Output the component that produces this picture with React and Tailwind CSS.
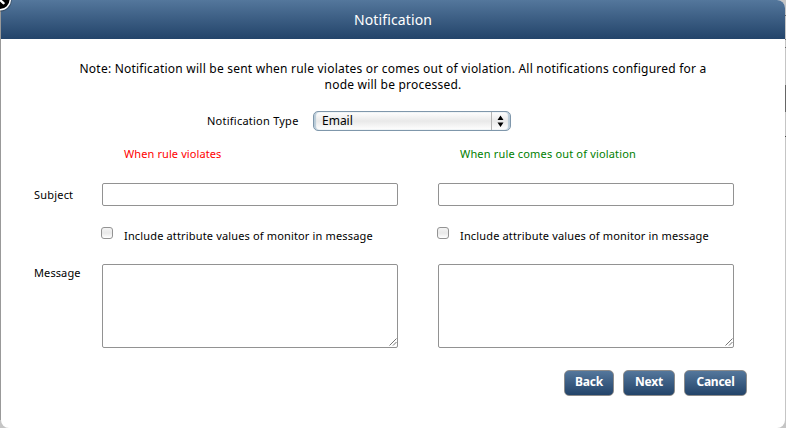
import React from 'react';

function Resizer() {
  return (
    <svg width="10" height="10" viewBox="0 0 10 10" className="absolute right-0 bottom-px">
      <path d="M1.5 8.5L8.5 1.5M5 8.5L8.5 5" stroke="#666" strokeWidth="0.9" fill="none" />
    </svg>
  );
}

function CheckRow() {
  return (
    <label className="flex h-[13px] w-[336px] items-start">
      <input
        type="checkbox"
        className="-ml-px size-3 shrink-0 appearance-none rounded-[3px] border border-[#939393] bg-linear-to-b from-[#f4f4f4] via-[#e9e9e9] to-white"
      />
      <span className="ml-[11px] pt-[2px] text-[11px] leading-[14px] tracking-[0.155px] whitespace-nowrap">
        Include attribute values of monitor in message
      </span>
    </label>
  );
}

function SubjectInput() {
  return <input type="text" className="mr-10 block h-[23px] w-[296px] rounded-[2px] border border-[#929292] bg-white" />;
}

function MessageArea() {
  return (
    <div className="relative mr-10 h-[84px] w-[296px]">
      <textarea className="block size-full resize-none rounded-[2px] border border-[#929292] bg-white" />
      <Resizer />
    </div>
  );
}

function Button({ className, children }) {
  return (
    <button
      className={
        'h-[26px] rounded-[5px] border border-[#8c8c8c] bg-linear-to-b from-[#54779c] to-[#23446a] pb-[2px] text-center text-[12px] leading-[22px] font-bold tracking-[-0.25px] text-white ' +
        className
      }
    >
      {children}
    </button>
  );
}

export default function App() {
  return (
    <div className="relative h-[428px] w-[786px] overflow-hidden bg-[#c5c5c5] font-['Noto_Sans','Open_Sans',sans-serif] text-black">
      <div className="absolute top-[15px] right-0 h-px w-px bg-[#666]" />
      <div className="absolute top-[39px] right-0 h-px w-px bg-[#777]" />
      <div className="absolute top-[47px] right-0 h-px w-px bg-[#666]" />
      <div className="absolute top-[85px] right-0 h-[27px] w-px bg-[#666]" />
      <div className="absolute top-[136px] right-0 h-px w-px bg-[#444]" />
      <div className="absolute top-0 left-0 h-[420px] w-px bg-[#999]" />
      <div className="relative ml-px h-[428px] w-[784px] overflow-hidden rounded-tr-[8px] rounded-b-[8px] bg-white">
        <header className="flex h-[39px] items-center justify-center bg-linear-to-b from-[#54779c] to-[#23446a]">
          <h1 className="text-[14px] leading-5 tracking-[0.14px] text-white">Notification</h1>
        </header>

        <p className="mt-[22px] text-center text-[12px] leading-4 tracking-[0.225px]">
          Note: Notification will be sent when rule violates or comes out of violation. All notifications configured for a
          <br />
          node will be processed.
        </p>

        <div className="mt-[18px] flex h-5 items-center">
          <span className="ml-[206px] w-[106px] text-[11px] leading-4 tracking-[0.24px]">Notification Type</span>
          <div className="flex h-5 w-[198px] items-center rounded-[5px] border border-[#7f97ab] bg-linear-to-b from-white via-[#e9e9e9] to-white shadow-[inset_2px_0_1px_#b9cbd8,inset_-2px_0_1px_#b9cbd8]">
            <span className="ml-2 flex-1 text-[12px] leading-4">Email</span>
            <span className="h-full w-px bg-[#b4b4b4]" />
            <svg width="18" height="18" viewBox="0 0 18 18" className="shrink-0">
              <path d="M5.5 8L8.5 3.5L11.5 8ZM5.5 10.5L8.5 15L11.5 10.5Z" fill="#000" />
            </svg>
          </div>
        </div>

        <div className="mt-[15px] flex h-4 pl-[123px] text-[11px] leading-4">
          <span className="w-[336px] tracking-[0.1px] text-[#ff0000]">When rule violates</span>
          <span className="tracking-[0.17px] text-[#008000]">When rule comes out of violation</span>
        </div>

        <div className="mt-[21px] flex h-[23px]">
          <span className="w-[101px] pt-1 pl-[33px] text-[11px] leading-4 tracking-[0.2px]">Subject</span>
          <SubjectInput />
          <SubjectInput />
        </div>

        <div className="mt-[21px] flex pl-[101px]">
          <CheckRow />
          <CheckRow />
        </div>

        <div className="mt-[24px] flex h-[84px]">
          <span className="w-[101px] pt-px pl-[33px] text-[11px] leading-4 tracking-[0.1px]">Message</span>
          <MessageArea />
          <MessageArea />
        </div>

        <div className="mt-[22px] flex justify-end gap-[9px] pr-[38px]">
          <Button className="w-[50px]">Back</Button>
          <Button className="w-[52px]">Next</Button>
          <Button className="w-[63px]">Cancel</Button>
        </div>
      </div>

      <svg width="16" height="16" viewBox="0 0 16 16" className="absolute top-0 left-0">
        <circle cx="0" cy="0" r="11.8" fill="#222" opacity="0.35" />
        <circle cx="0" cy="-0.5" r="10.3" fill="#000" stroke="#fff" strokeWidth="1.5" />
        <path d="M-1 -1L3.5 3.2" stroke="#fff" strokeWidth="2.4" strokeLinecap="round" />
      </svg>
    </div>
  );
}
